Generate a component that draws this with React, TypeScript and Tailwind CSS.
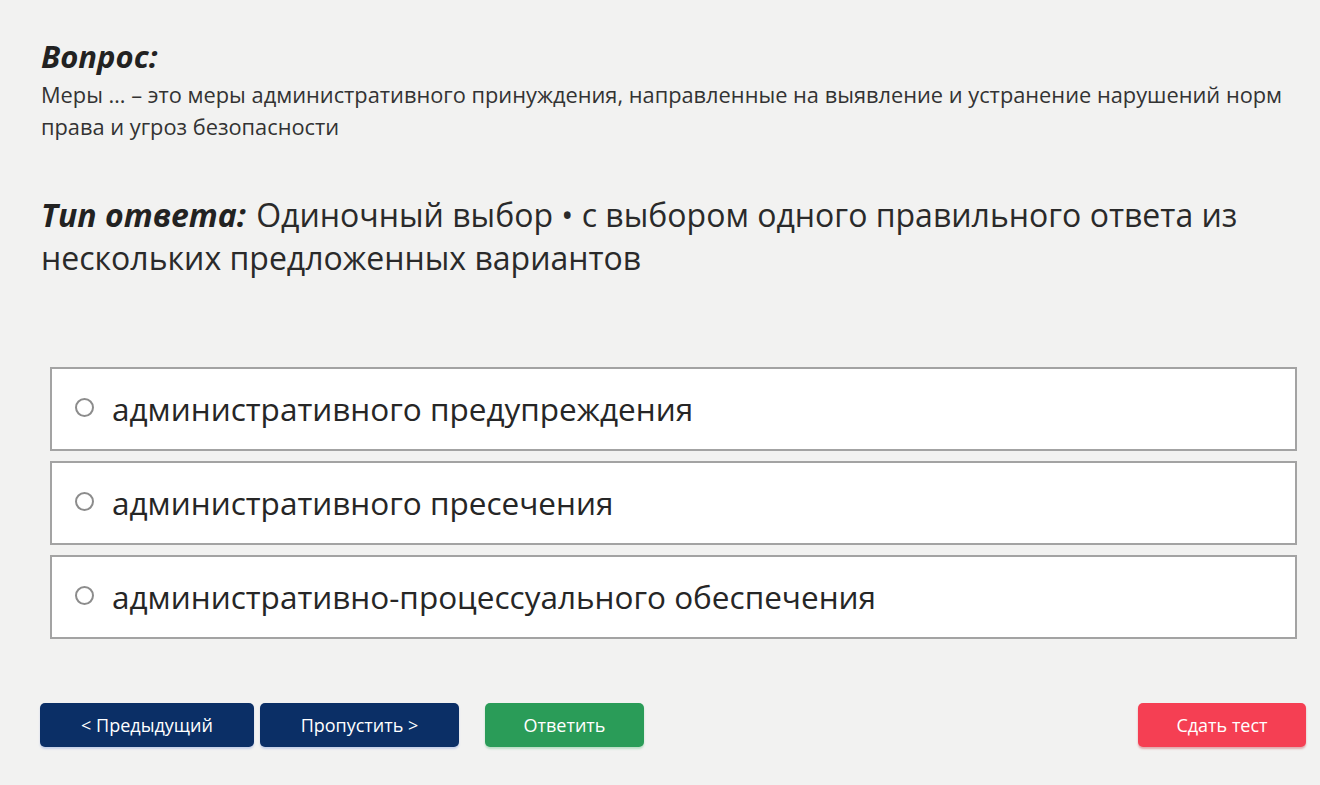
import React from "react";

const options = [
  "административного предупреждения",
  "административного пресечения",
  "административно-процессуального обеспечения",
];

export default function App() {
  return (
    <div
      className="w-[1320px] h-[785px] bg-[#f2f2f1] text-[#262626] overflow-hidden"
      style={{ fontFamily: '"Open Sans", "Noto Sans", sans-serif' }}
    >
      <div className="pl-[41px] pr-[28px] pt-[36px]">
        <div className="text-[31px] leading-[40px] font-bold italic text-[#222]">Вопрос:</div>
        <div className="text-[21.8px] leading-[32px] text-[#333] mt-[3px]">
          Меры … – это меры административного принуждения, направленные на выявление и устранение нарушений норм права и угроз безопасности
        </div>
        <div className="mt-[50px] text-[32px] leading-[43px] text-[#2a2a2a]">
          <span className="font-bold italic text-[#222] mr-[2px]">Тип ответа:</span>{" "}
          Одиночный выбор • с выбором одного правильного ответа из нескольких предложенных вариантов
        </div>
      </div>

      <div className="ml-[50px] mr-[23px] mt-[88px] flex flex-col gap-[10px]">
        {options.map((o) => (
          <div
            key={o}
            className="h-[84px] bg-white border-2 border-[#a3a3a3] flex items-center pl-[23px]"
          >
            <span className="w-[19px] h-[19px] rounded-full border-2 border-[#8c8c8c] bg-white shrink-0 mt-[-3px]" />
            <span className="ml-[18px] text-[31.5px] leading-[40px] text-[#262626]">{o}</span>
          </div>
        ))}
      </div>

      <div className="mt-[64px] pl-[40px] pr-[14px] flex items-center text-white text-[18px]">
        <button className="w-[214px] h-[44px] rounded-[5px] bg-[#0b2f66] shadow-[0_2px_2px_rgba(120,150,220,0.35)]">
          &lt; Предыдущий
        </button>
        <button className="ml-[6px] w-[199px] h-[44px] rounded-[5px] bg-[#0b2f66] shadow-[0_2px_2px_rgba(120,150,220,0.35)]">
          Пропустить &gt;
        </button>
        <button className="ml-[26px] w-[159px] h-[44px] rounded-[5px] bg-[#2a9c58] shadow-[0_2px_2px_rgba(60,180,100,0.3)]">
          Ответить
        </button>
        <div className="flex-1" />
        <button className="w-[168px] h-[44px] rounded-[5px] bg-[#f53f53] shadow-[0_2px_2px_rgba(200,60,70,0.4)]">
          Сдать тест
        </button>
      </div>
    </div>
  );
}
